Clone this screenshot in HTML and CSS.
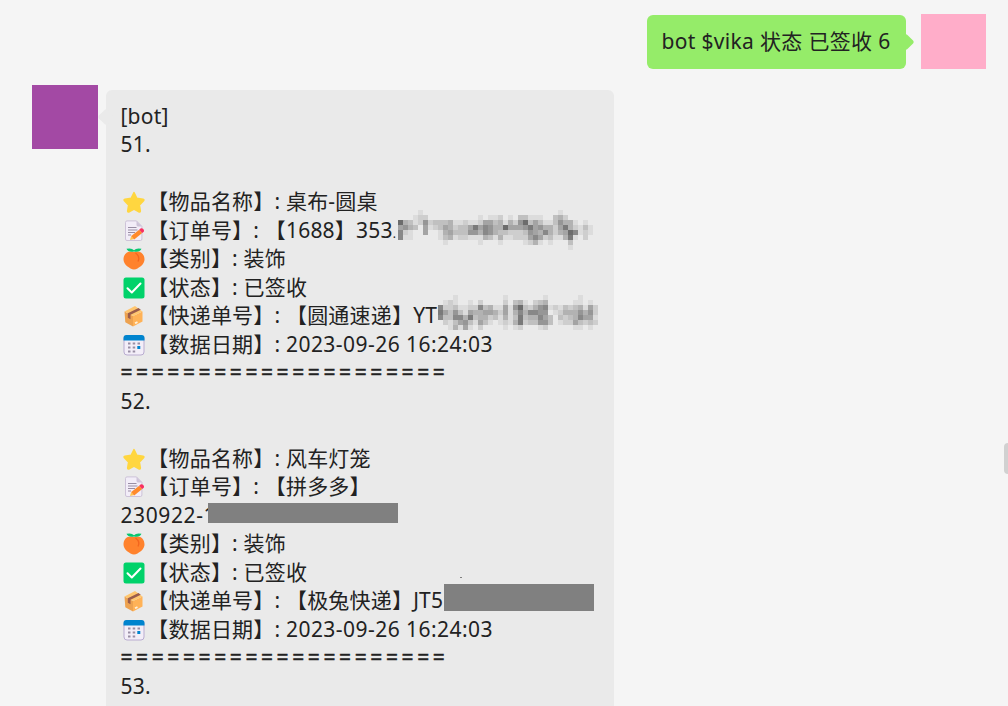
FILE: index.html
```html
<!DOCTYPE html>
<html lang="zh-CN">
<head>
<meta charset="utf-8">
<title>bot</title>
<link rel="stylesheet" href="styles.css">
</head>
<body>
<svg class="defs" width="0" height="0">
  <symbol id="star" viewBox="0 0 22 22"><path d="M11 1.800l2.700 5.700 6.400.9q1.200.3.4 1.200l-4.300 4.400 1 6q0 1.200-1.200.8L11 17.900l-5 2.900q-1.200.4-1.200-.8l1-6L1.500 9.600q-.8-.9.4-1.200l6.400-.9z" fill="#ffd640" stroke="#ffd640" stroke-width="1.800" stroke-linejoin="round"/></symbol>
  <symbol id="memo" viewBox="0 0 22 22"><path d="M4 .9h9.500l5.400 5.400V19q0 1.500-1.500 1.500H4Q2.500 20.500 2.500 19V2.400Q2.500.9 4 .9z" fill="#f2edf8" stroke="#cdc3d8"/><path d="M13.500 1v4q0 1.400 1.400 1.400h4z" fill="#cdc3d8"/><path d="M5 7.500h8.500M5 10h9.500M5 12.500h7M5 15h3" stroke="#998ea4" stroke-width="1"/><path d="M7 20l1.200-4 3 3z" fill="#ffc34d"/><path d="M8.200 16l8-6.300 3 3.300-8 6.500z" fill="#ff8a2b"/><path d="M16.200 9.700l1.300-1.200q1.500-.8 2.800.6t.5 2.700L19.200 13z" fill="#f92f60"/></symbol>
  <symbol id="peach" viewBox="0 0 22 22"><path d="M11 4C4.500 2 .5 6 .5 11.500.5 16 5 19 7.500 20.500q3.500 2 7 0c2.500-1.500 7-4.500 7-9C21.500 6 17.500 2 11 4z" fill="#ff822d"/><path d="M12.500 5q5 3.500 2.500 8.500" fill="none" stroke="#f3651e" stroke-width="1.300"/><path d="M3.500.8Q8.500-.5 11 2.200 13.500-.5 18.500.8 17 4.500 11 3.600 5 4.500 3.500.8z" fill="#08c770"/></symbol>
  <symbol id="check" viewBox="0 0 22 22"><rect x=".5" y=".5" width="21" height="21" rx="2.500" fill="#00d26a"/><path d="M4.500 11.300l4.300 4.200 8.700-9" fill="none" stroke="#fff" stroke-width="2" stroke-linecap="round" stroke-linejoin="round"/></symbol>
  <symbol id="box" viewBox="0 0 22 22"><path d="M1.500 6.500L10 11v10.500l-7.700-4.300z" fill="#eda250"/><path d="M10 11l9.500-4.500v10L10 21.500z" fill="#ffb257"/><path d="M1.500 6.500L12 1l7.500 5.500L10 11z" fill="#ffc66f"/><path d="M4.800 8.200L15.500 3.100l2.300 1.700L7.500 9.700v4.500l-2.700-1.500z" fill="#9b5c4b"/><path d="M12 18.300l2.500-1.200" stroke="#fff2dc" stroke-width="1.800"/></symbol>
  <symbol id="calendar" viewBox="0 0 22 22"><rect x="1" y="1.500" width="20" height="19.500" rx="3" fill="#f3eef8" stroke="#b9acd0"/><path d="M.5 6.500V4q0-3 3-3h15q3 0 3 3v2.500z" fill="#0084ce"/><path d="M5 9.500h2.500M9.700 9.500h2.500M14.500 9.500H17M5 13.500h2.500M9.700 13.500h2.500M5 17.500h2.500M9.700 17.500h2.500" stroke="#998ea4" stroke-width="2"/><path d="M14.300 13.500h3" stroke="#0084ce" stroke-width="3"/></symbol>
</svg>
<main class="chat">
  <div class="row sent">
    <div class="bubble green">bot $vika 状态 已签收 6</div>
    <div class="avatar pink"></div>
  </div>
  <div class="row received">
    <div class="avatar purple"></div>
    <div class="bubble gray">
      <div class="line">[bot]</div>
      <div class="line">51.</div>
      <div class="line"></div>
      <div class="line"><svg class="icon"><use href="#star"/></svg>【物品名称】: 桌布-圆桌</div>
      <div class="line"><svg class="icon"><use href="#memo"/></svg>【订单号】: 【1688】353<span class="dot">.</span><svg class="mosaic order" id="m1"></svg></div>
      <div class="line"><svg class="icon"><use href="#peach"/></svg>【类别】: 装饰</div>
      <div class="line"><svg class="icon"><use href="#check"/></svg>【状态】: 已签收</div>
      <div class="line"><svg class="icon"><use href="#box"/></svg>【快递单号】: 【圆通速递】YT<svg class="mosaic parcel" id="m2"></svg></div>
      <div class="line"><svg class="icon"><use href="#calendar"/></svg>【数据日期】: <span class="date">2023-09-26 16:24:03</span></div>
      <div class="line rule">=====================</div>
      <div class="line">52.</div>
      <div class="line"></div>
      <div class="line"><svg class="icon"><use href="#star"/></svg>【物品名称】: 风车灯笼</div>
      <div class="line"><svg class="icon"><use href="#memo"/></svg>【订单号】: 【拼多多】</div>
      <div class="line number">230922-1<span class="redact order-bar"></span></div>
      <div class="line"><svg class="icon"><use href="#peach"/></svg>【类别】: 装饰</div>
      <div class="line"><svg class="icon"><use href="#check"/></svg>【状态】: 已签收<span class="redact speck"></span></div>
      <div class="line"><svg class="icon"><use href="#box"/></svg>【快递单号】: 【极兔快递】JT5<span class="redact parcel-bar"></span></div>
      <div class="line"><svg class="icon"><use href="#calendar"/></svg>【数据日期】: <span class="date">2023-09-26 16:24:03</span></div>
      <div class="line rule">=====================</div>
      <div class="line">53.</div>
    </div>
  </div>
  <div class="scroll-thumb"></div>
</main>
<script src="mosaic.js"></script>
</body>
</html>
```
FILE: styles.css
```css
* { box-sizing: border-box; }
body {
  margin: 0;
  background: #f5f5f5;
  color: #222;
  font-family: "Noto Sans", "Noto Sans CJK SC", sans-serif;
  font-size: 21px;
  font-weight: 400;
  letter-spacing: .2px;
  line-height: 28.5px;
}
.defs { position: absolute; }
.chat { position: relative; height: 706px; overflow: hidden; padding-top: 14px; }
.row { display: flex; }
.sent { justify-content: flex-end; padding-right: 22px; gap: 15px; height: 71px; }
.received { padding-left: 32px; gap: 8px; }
.avatar { flex: none; width: 66px; height: 64px; }
.pink { width: 65px; height: 55px; background: #ffadc9; }
.purple { background: #a349a4; }
.bubble { position: relative; border-radius: 6px; }
.green { width: 259px; height: 54px; margin-top: 1px; padding: 12px 0 12px 14.5px; background: #95ec69; letter-spacing: .33px; white-space: nowrap; }
.gray { width: 508px; height: 640px; margin-top: 5px; padding: 11.7px 14.5px; background: #eaeaea; }
.green::after, .gray::before {
  content: "";
  position: absolute;
  top: 21px;
  width: 12px;
  height: 12px;
  border-radius: 2px;
  transform: rotate(45deg);
}
.green::after { right: -6px; background: #95ec69; }
.gray::before { left: -6px; background: #eaeaea; }
.line { position: relative; height: 28.5px; white-space: pre; }
.icon { width: 22px; height: 22px; margin: 0 2.2px 0 2.6px; vertical-align: -4px; }
.date { letter-spacing: .45px; }
.number { letter-spacing: .6px; }
.dot { font-size: 12px; }
.rule { letter-spacing: 3.6px; -webkit-text-stroke: .4px #222; }
.mosaic { position: absolute; height: 40px; shape-rendering: crispEdges; }
.order { left: 277.5px; top: -5.7px; width: 195px; }
.parcel { left: 317.5px; top: -6.2px; width: 160px; }
.redact { position: absolute; background: #808080; }
.order-bar { left: 87.5px; top: 2.3px; width: 190px; height: 20px; }
.parcel-bar { left: 323.5px; top: -2.2px; width: 150px; height: 27px; }
.speck { left: 339.5px; top: 19.3px; width: 2px; height: 1px; }
.scroll-thumb { position: absolute; right: -4px; top: 443px; width: 8px; height: 31px; border-radius: 4px; background: #d1d1d1; }
```
FILE: mosaic.js
```js
// Each digit is the darkness of one 5px tile.
const tiles = {
  m1: [
    "000010000000000000000000000000001000000",
    "000122000000000010112010331110034200000",
    "943126233341121125534142693531136441010",
    "564305123542335857644955568564425842131",
    "721005001453336647643322236547424597121",
    "711000001341221114314112225752311481020",
    "000000000100000010001000012410100030000",
    "000000000000000000000000000000000010000"
  ],
  m2: [
    "00010000000001000000010000001000",
    "01210010200002034102340000011010",
    "72231122734115169324671213234152",
    "85363154455425147477660124446462",
    "73377483442314138344753032347551",
    "02135631531012148233663012253232",
    "00141510200001012000120000011010"
  ]
};
for (const [id, rows] of Object.entries(tiles)) {
  const svg = document.getElementById(id);
  rows.forEach((row, y) => [...row].forEach((digit, x) => {
    if (digit === "0") return;
    const rect = document.createElementNS("http://www.w3.org/2000/svg", "rect");
    const shade = 234 - digit * 14;
    rect.setAttribute("x", x * 5);
    rect.setAttribute("y", y * 5);
    rect.setAttribute("width", 5);
    rect.setAttribute("height", 5);
    rect.setAttribute("fill", `rgb(${shade},${shade},${shade})`);
    svg.appendChild(rect);
  }));
}
```
